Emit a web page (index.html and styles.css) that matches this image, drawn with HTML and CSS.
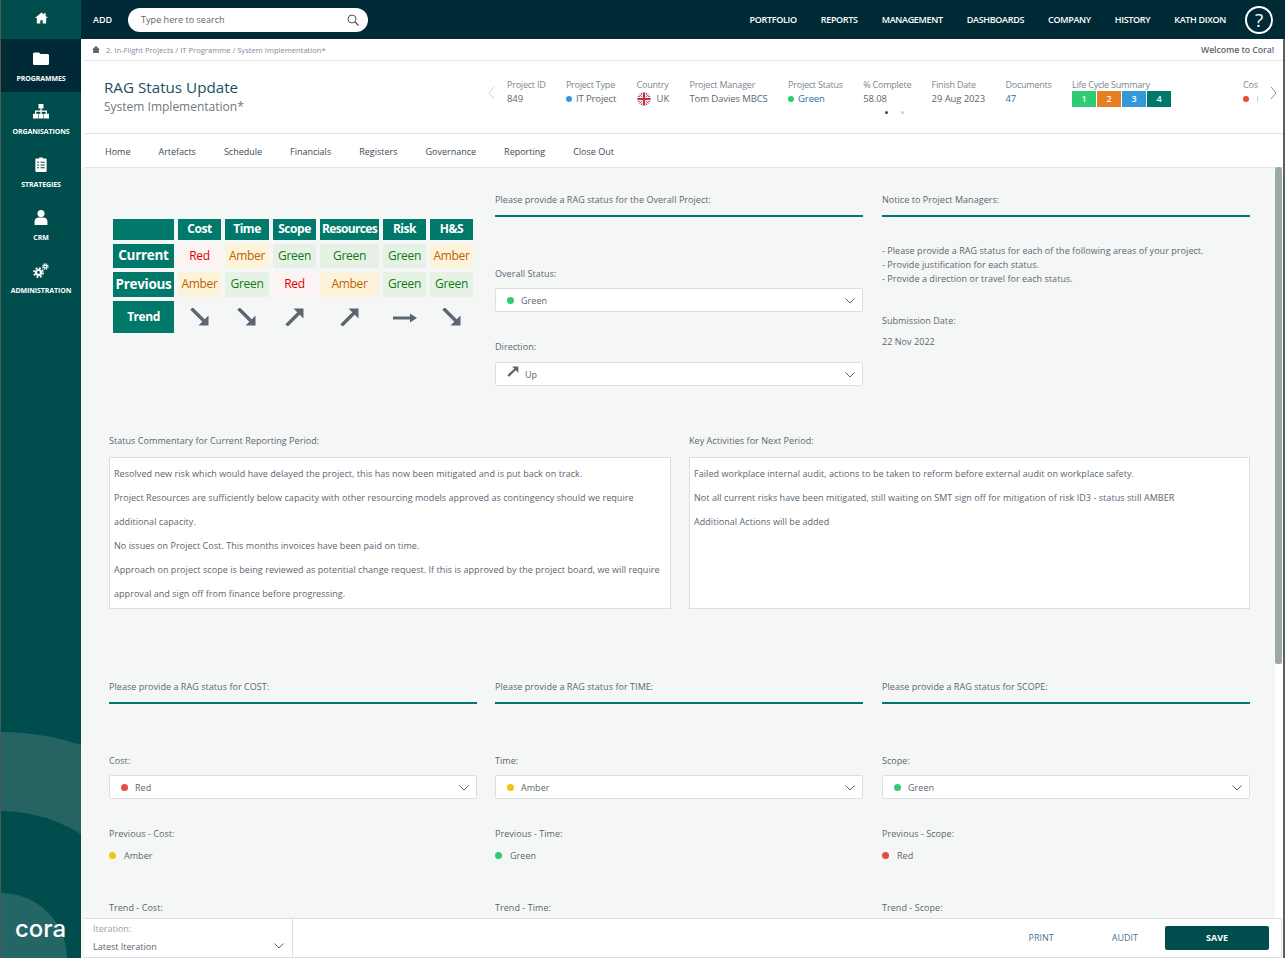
FILE: index.html
```html
<!DOCTYPE html>
<html lang="en">
<head>
<meta charset="utf-8">
<title>RAG Status Update</title>
<link rel="stylesheet" href="styles.css">
</head>
<body>
<div class="app">
  <aside class="sidebar">
    <div class="side-home"><svg class="ic-home" viewBox="0 0 14 12"><path d="M7 0 L9.500 2.100 V1 H11.500 V3.800 L14 6 H12 V12 H8.300 V8.500 H5.700 V12 H2 V6 H0 Z"/></svg></div>
    <div class="side-item active"><svg class="ic" viewBox="0 0 16 14"><path d="M1.500 1 H6 L7.500 2.500 H14.500 A1.500 1.500 0 0 1 16 4 V12 A1.500 1.500 0 0 1 14.500 13.500 H1.500 A1.500 1.500 0 0 1 0 12 V2.500 A1.500 1.500 0 0 1 1.500 1 Z"/></svg><span>PROGRAMMES</span></div>
    <div class="side-item"><svg class="ic" viewBox="0 0 16 15"><rect x="5.500" y="0" width="5" height="4.500"/><rect x="7.300" y="4.500" width="1.400" height="2.500"/><rect x="2" y="6.500" width="12" height="1.300"/><rect x="2" y="7" width="1.300" height="3"/><rect x="12.700" y="7" width="1.300" height="3"/><rect x="7.300" y="7" width="1.400" height="3"/><rect x="0" y="9.800" width="5" height="4.700"/><rect x="5.500" y="9.800" width="5" height="4.700"/><rect x="11" y="9.800" width="5" height="4.700"/></svg><span>ORGANISATIONS</span></div>
    <div class="side-item"><svg class="ic" viewBox="0 0 12 16"><path fill-rule="evenodd" d="M1 1.500 H4 V0.500 H8 V1.500 H11 A1 1 0 0 1 12 2.500 V15 A1 1 0 0 1 11 16 H1 A1 1 0 0 1 0 15 V2.500 A1 1 0 0 1 1 1.500 Z M2 5 V6 H4 V5 Z M5.500 5 V6 H10 V5 Z M2 8 V9 H4 V8 Z M5.500 8 V9 H10 V8 Z M2 11 V12 H4 V11 Z M5.500 11 V12 H10 V11 Z"/></svg><span>STRATEGIES</span></div>
    <div class="side-item"><svg class="ic" viewBox="0 0 12 14"><circle cx="6" cy="3.300" r="3.300"/><path d="M0 14 V11 A4 4 0 0 1 3.500 7 H8.500 A4 4 0 0 1 12 11 V14 Z"/></svg><span>CRM</span></div>
    <div class="side-item"><svg class="ic" viewBox="0 0 16 15"><circle cx="5.500" cy="9.500" r="2.500" fill="none" stroke="#fff" stroke-width="2.200"/><circle cx="5.500" cy="9.500" r="4.500" fill="none" stroke="#fff" stroke-width="1.800" stroke-dasharray="1.900 1.630"/><circle cx="12.300" cy="3.500" r="1.500" fill="none" stroke="#fff" stroke-width="1.300"/><circle cx="12.300" cy="3.500" r="2.700" fill="none" stroke="#fff" stroke-width="1.200" stroke-dasharray="1.200 0.920"/></svg><span>ADMINISTRATION</span></div>
    <div class="swoosh swoosh-a"></div>
    <div class="swoosh swoosh-b"></div>
    <div class="logo">cora</div>
  </aside>
  <div class="main">
    <header class="topbar">
      <span class="add">ADD</span>
      <div class="search"><span>Type here to search</span><svg class="search-ic" viewBox="0 0 12 12"><circle cx="5" cy="5" r="4" fill="none" stroke="#555" stroke-width="1"/><path d="M8 8 L11.500 11.500" stroke="#555" stroke-width="1.200"/></svg></div>
      <nav class="topnav">
        <span>PORTFOLIO</span><span>REPORTS</span><span>MANAGEMENT</span><span>DASHBOARDS</span><span>COMPANY</span><span>HISTORY</span><span>KATH DIXON</span>
      </nav>
      <div class="help">?</div>
    </header>
    <div class="crumbs">
      <svg class="crumb-home" viewBox="0 0 14 12"><path d="M7 0 L14 6 H12 V12 H2 V6 H0 Z"/></svg>
      <span class="crumb-text">2. In-Flight Projects / IT Programme / System Implementation*</span>
      <span class="welcome">Welcome to Cora!</span>
    </div>
    <section class="head">
      <div class="title-block">
        <h1>RAG Status Update</h1>
        <p>System Implementation*</p>
      </div>
      <div class="chev-l"><svg viewBox="0 0 7 14"><path d="M6 1 L1 7 L6 13" fill="none" stroke="#ccd0d4"/></svg></div>
      <div class="summary">
        <div class="stat"><label>Project ID</label><div>849</div></div>
        <div class="stat"><label>Project Type</label><div><i class="dot blue"></i>IT Project</div></div>
        <div class="stat"><label>Country</label><div class="uk"><svg class="flag" viewBox="0 0 14 14"><defs><clipPath id="c"><circle cx="7" cy="7" r="6.500"/></clipPath></defs><g clip-path="url(#c)"><rect width="14" height="14" fill="#4a5ea8"/><path d="M0 0 L14 14 M14 0 L0 14" stroke="#f4f4f4" stroke-width="2.600"/><path d="M0 0 L14 14 M14 0 L0 14" stroke="#d8586c" stroke-width="1"/><path d="M7 0 V14 M0 7 H14" stroke="#f4f4f4" stroke-width="4"/><path d="M7 0 V14 M0 7 H14" stroke="#d8283c" stroke-width="2.200"/></g></svg>UK</div></div>
        <div class="stat"><label>Project Manager</label><div>Tom Davies MBCS</div></div>
        <div class="stat"><label>Project Status</label><div class="link"><i class="dot green"></i>Green</div></div>
        <div class="stat"><label>% Complete</label><div>58.08</div></div>
        <div class="stat"><label>Finish Date</label><div>29 Aug 2023</div></div>
        <div class="stat"><label>Documents</label><div class="link">47</div></div>
        <div class="stat life"><label>Life Cycle Summary</label><div class="phases"><b class="p1">1</b><b class="p2">2</b><b class="p3">3</b><b class="p4">4</b></div></div>
      </div>
      <div class="stat clipped"><label>Cos</label><div><i class="dot red"></i><i class="tick"></i></div></div>
      <div class="chev-r"><svg viewBox="0 0 7 14"><path d="M1 1 L6 7 L1 13" fill="none" stroke="#8a929a"/></svg></div>
      <div class="pager"><i class="on"></i><i></i></div>
    </section>
    <nav class="tabs">
      <span>Home</span><span>Artefacts</span><span>Schedule</span><span>Financials</span><span>Registers</span><span>Governance</span><span>Reporting</span><span>Close Out</span>
    </nav>
    <div class="scrollbar"><div class="thumb"></div></div>
    <div class="edge"></div>
    <main class="content">
      <div class="row top">
        <div class="col rag-col">
          <table class="rag">
            <tr><th class="blank"></th><th>Cost</th><th>Time</th><th>Scope</th><th class="wide">Resources</th><th>Risk</th><th>H&amp;S</th></tr>
            <tr class="r-cur"><th class="big">Current</th><td class="red">Red</td><td class="amber">Amber</td><td class="green">Green</td><td class="green">Green</td><td class="green">Green</td><td class="amber">Amber</td></tr>
            <tr class="r-prev"><th class="big">Previous</th><td class="amber">Amber</td><td class="green">Green</td><td class="red">Red</td><td class="amber">Amber</td><td class="green">Green</td><td class="green">Green</td></tr>
            <tr class="r-trend"><th>Trend</th>
              <td class="arrow"><svg viewBox="0 0 20 18"><use href="#down"/></svg></td>
              <td class="arrow"><svg viewBox="0 0 20 18"><use href="#down"/></svg></td>
              <td class="arrow"><svg viewBox="0 0 20 18"><use href="#up"/></svg></td>
              <td class="arrow"><svg viewBox="0 0 20 18"><use href="#up"/></svg></td>
              <td class="arrow"><svg class="flat" viewBox="0 0 24 12"><path d="M0 6 H19" stroke="#5b6670" stroke-width="3"/><path d="M17 1.500 L24 6 L17 10.500 Z" fill="#5b6670"/></svg></td>
              <td class="arrow"><svg viewBox="0 0 20 18"><use href="#down"/></svg></td>
            </tr>
          </table>
          <svg class="defs" width="0" height="0"><defs>
            <g id="down"><path d="M1.500 0.500 L16 15" stroke="#5b6670" stroke-width="3.400"/><path d="M18.500 17.500 H8.500 L18.500 7.500 Z" fill="#5b6670"/></g>
            <g id="up"><path d="M1.500 17.500 L16 3" stroke="#5b6670" stroke-width="3.400"/><path d="M18.500 0.500 H8.500 L18.500 10.500 Z" fill="#5b6670"/></g>
          </defs></svg>
        </div>
        <div class="col">
          <div class="sec">Please provide a RAG status for the Overall Project:</div>
          <label class="lbl l-overall">Overall Status:</label>
          <div class="select"><i class="dot green"></i>Green<svg class="caret" viewBox="0 0 10 6"><path d="M0.500 0.500 L5 5 L9.500 0.500" fill="none" stroke="#5b6670"/></svg></div>
          <label class="lbl l-dir">Direction:</label>
          <div class="select"><svg class="mini" viewBox="0 0 20 18"><path d="M2 16.500 L15 4" stroke="#5b6670" stroke-width="4"/><path d="M19 0.500 H8.500 L19 11 Z" fill="#5b6670"/></svg>Up<svg class="caret" viewBox="0 0 10 6"><path d="M0.500 0.500 L5 5 L9.500 0.500" fill="none" stroke="#5b6670"/></svg></div>
        </div>
        <div class="col">
          <div class="sec">Notice to Project Managers:</div>
          <ul class="notice">
            <li>- Please provide a RAG status for each of the following areas of your project.</li>
            <li>- Provide justification for each status.</li>
            <li>- Provide a direction or travel for each status.</li>
          </ul>
          <label class="lbl l-sub">Submission Date:</label>
          <div class="val">22 Nov 2022</div>
        </div>
      </div>
      <div class="row two">
        <div class="col">
          <label class="lbl">Status Commentary for Current Reporting Period:</label>
          <div class="box">
            <p>Resolved new risk which would have delayed the project, this has now been mitigated and is put back on track.</p>
            <p>Project Resources are sufficiently below capacity with other resourcing models approved as contingency should we require additional capacity.</p>
            <p>No issues on Project Cost. This months invoices have been paid on time.</p>
            <p>Approach on project scope is being reviewed as potential change request. If this is approved by the project board, we will require approval and sign off from finance before progressing.</p>
          </div>
        </div>
        <div class="col">
          <label class="lbl">Key Activities for Next Period:</label>
          <div class="box">
            <p>Failed workplace internal audit, actions to be taken to reform before external audit on workplace safety.</p>
            <p>Not all current risks have been mitigated, still waiting on SMT sign off for mitigation of risk ID3 - status still AMBER</p>
            <p>Additional Actions will be added</p>
          </div>
        </div>
      </div>
      <div class="row three">
        <div class="col">
          <div class="sec">Please provide a RAG status for COST:</div>
          <label class="lbl l-field">Cost:</label>
          <div class="select"><i class="dot red"></i>Red<svg class="caret" viewBox="0 0 10 6"><path d="M0.500 0.500 L5 5 L9.500 0.500" fill="none" stroke="#5b6670"/></svg></div>
          <label class="lbl l-prev">Previous - Cost:</label>
          <div class="val dotted"><i class="dot yellow"></i>Amber</div>
          <label class="lbl l-trend">Trend - Cost:</label>
        </div>
        <div class="col">
          <div class="sec">Please provide a RAG status for TIME:</div>
          <label class="lbl l-field">Time:</label>
          <div class="select"><i class="dot yellow"></i>Amber<svg class="caret" viewBox="0 0 10 6"><path d="M0.500 0.500 L5 5 L9.500 0.500" fill="none" stroke="#5b6670"/></svg></div>
          <label class="lbl l-prev">Previous - Time:</label>
          <div class="val dotted"><i class="dot green"></i>Green</div>
          <label class="lbl l-trend">Trend - Time:</label>
        </div>
        <div class="col">
          <div class="sec">Please provide a RAG status for SCOPE:</div>
          <label class="lbl l-field">Scope:</label>
          <div class="select"><i class="dot green"></i>Green<svg class="caret" viewBox="0 0 10 6"><path d="M0.500 0.500 L5 5 L9.500 0.500" fill="none" stroke="#5b6670"/></svg></div>
          <label class="lbl l-prev">Previous - Scope:</label>
          <div class="val dotted"><i class="dot red"></i>Red</div>
          <label class="lbl l-trend">Trend - Scope:</label>
        </div>
      </div>
    </main>
    <footer class="footer">
      <div class="iter">
        <label>Iteration:</label>
        <div class="iter-val">Latest Iteration<svg class="caret" viewBox="0 0 10 6"><path d="M0.500 0.500 L5 5 L9.500 0.500" fill="none" stroke="#5b6670"/></svg></div>
      </div>
      <div class="actions"><span>PRINT</span><span>AUDIT</span><button class="save">SAVE</button></div>
    </footer>
  </div>
</div>
</body>
</html>
```
FILE: styles.css
```css
* { box-sizing: border-box; }
html, body { margin: 0; height: 100%; overflow: hidden; }
body { font-family: "Open Sans", "Noto Sans", sans-serif; font-size: 9px; color: #5b6670; background: #fff; }
.app { display: flex; width: 1285px; height: 958px; }

.sidebar { position: relative; width: 81px; flex: none; background: #004d4d; border-left: 1px solid #555; overflow: hidden; }
.side-home { height: 39px; display: flex; align-items: center; justify-content: center; padding-bottom: 3px; }
.ic-home { width: 13px; height: 12px; fill: #fff; }
.side-item { height: 53px; display: flex; flex-direction: column; align-items: center; padding-top: 12px; gap: 8px; color: #fff; font-size: 7px; font-weight: 700; letter-spacing: -0.1px; }
.side-item.active { background: #002b36; }
.ic { height: 15px; width: 16px; fill: #fff; }
.swoosh { position: absolute; background: rgba(255,255,255,.14); border-radius: 50%; }
.swoosh-a { left: -252px; top: 732px; width: 504px; height: 504px; overflow: hidden; background: #266363; }
.swoosh-a::after { content: ""; position: absolute; left: 102px; top: 79px; width: 300px; height: 300px; border-radius: 50%; background: #004d4d; }
.swoosh-b { left: -66px; top: 893px; width: 132px; height: 132px; }
.logo { position: absolute; left: 14px; top: 915px; color: #fff; font-size: 24px; line-height: 28px; font-weight: 500; font-family: "Inter", sans-serif; }

.main { position: relative; flex: 1; min-width: 0; display: flex; flex-direction: column; }

.topbar { height: 39px; flex: none; background: #002b36; color: #fff; display: flex; align-items: center; padding-left: 12px; }
.add { font-size: 9px; font-weight: 600; width: 35px; }
.search { position: relative; width: 240px; height: 24px; background: #fff; border-radius: 12px; display: flex; align-items: center; padding-left: 13px; color: #666; font-size: 9.100px; }
.search-ic { position: absolute; right: 9px; top: 6px; width: 12px; height: 12px; }
.topnav { margin-left: auto; display: flex; gap: 24px; font-size: 9px; font-weight: 600; letter-spacing: -0.32px; }
.help { width: 28px; height: 28px; margin: 0 12px 0 19px; border: 2px solid #fff; border-radius: 50%; display: flex; align-items: center; justify-content: center; font-size: 19px; }

.crumbs { height: 22px; flex: none; display: flex; align-items: center; margin-left: 3px; padding: 0 11px 0 8px; border-bottom: 1px solid #e2e4e6; font-size: 7.500px; color: #7b8a99; letter-spacing: 0.05px; }
.crumb-home { width: 8px; height: 7px; fill: #5b6670; margin-right: 6px; }
.welcome { margin-left: auto; font-size: 8.700px; font-weight: 600; color: #5b6670; letter-spacing: -0.05px; }

.head { position: relative; height: 73px; flex: none; margin-left: 3px; border-bottom: 1px solid #e2e4e6; display: flex; }
.title-block { width: 380px; padding: 16px 0 0 20px; }
.title-block h1 { margin: 0 0 1px; font-size: 15.200px; font-weight: 400; color: #22505e; line-height: 20px; }
.title-block p { margin: 0; font-size: 12px; line-height: 18px; color: #6e7880; }
.chev-l { position: absolute; left: 404px; top: 25px; }
.chev-l svg, .chev-r svg { width: 7px; height: 14px; display: block; }
.chev-r { position: absolute; right: 8px; top: 25px; }
.summary { display: flex; padding: 17px 0 0 40px; gap: 20.350px; position: absolute; left: 383px; top: 0; }
.stat { font-size: 9.500px; line-height: 14px; white-space: nowrap; letter-spacing: -0.1px; }
.stat label { display: block; color: #7c8791; font-size: 9px; letter-spacing: -0.22px; }
.dot { display: inline-block; width: 6px; height: 6px; border-radius: 50%; margin-right: 4px; vertical-align: 0; }
.blue { background: #3498db; }
.dot.green { background: #2ecc71; }
.dot.red { background: #e74c3c; }
.dot.yellow { background: #f1c40f; }
.link { color: #2a6fa8; }
.uk { display: flex; align-items: center; gap: 6px; }
.flag { width: 14px; height: 14px; }
.phases { display: flex; gap: 1px; margin-top: -1px; }
.phases b { width: 24px; height: 16px; display: flex; align-items: center; justify-content: center; color: #fff; font-size: 9px; font-weight: 600; }
.p1 { background: #2ecc71; } .p2 { background: #e67e22; } .p3 { background: #3498db; } .p4 { background: #00796b; }
.clipped { position: absolute; left: 1159px; top: 17px; }
.tick { display: inline-block; width: 1px; height: 6px; margin-left: 4px; background: #c9cdd1; }
.pager { position: absolute; left: 801px; top: 50px; display: flex; gap: 13px; }
.pager i { width: 3px; height: 3px; border-radius: 50%; background: #c9cdd1; }
.pager i.on { background: #3d4750; }

.tabs { height: 34px; flex: none; display: flex; align-items: center; gap: 28px; margin-left: 3px; padding: 1px 0 0 21px; border-bottom: 1px solid #e2e4e6; font-size: 9px; color: #3d4a55; letter-spacing: 0; }

.scrollbar { position: absolute; right: 3px; top: 167px; bottom: 0; width: 7px; }
.thumb { width: 7px; height: 497px; background: #9aa9a9; border-radius: 3px 3px 2px 2px; }
.edge { position: absolute; right: 0; top: 39px; bottom: 0; width: 2px; background: #5a5f63; }

.content { flex: 1; min-height: 0; overflow: hidden; background: #f5f7f7; padding: 27px 0 0 28px; margin-right: 10px; letter-spacing: 0.05px; }
.row { display: grid; grid-template-columns: 386px 387px 368px; }
.row .col { width: 368px; }
.rag-col { padding-top: 20px; }
.sec { height: 22px; border-bottom: 2px solid #00796b; line-height: 10px; font-size: 9px; }
.lbl { display: block; line-height: 12px; }
.select { position: relative; height: 24px; background: #fff; border: 1px solid #dcdfe1; border-radius: 2px; display: flex; align-items: center; padding-left: 11px; }
.select .dot { width: 7px; height: 7px; margin-right: 7px; }
.caret { position: absolute; right: 7px; top: 9px; width: 10px; height: 6px; }
.mini { width: 12px; height: 11px; margin-right: 6px; margin-top: -6px; }
.l-overall { margin-top: 51px; margin-bottom: 8px; }
.l-dir { margin-top: 29px; margin-bottom: 9px; }
.notice { list-style: none; margin: 27px 0 0; padding: 0; line-height: 14px; }
.l-sub { margin-top: 29px; }
.val { margin-top: 9px; line-height: 12px; }
.l-field { margin-top: 51px; margin-bottom: 8px; }
.l-prev { margin-top: 29px; }
.val.dotted { margin-top: 10px; }
.val.dotted .dot { width: 7px; height: 7px; margin-right: 8px; }
.l-trend { margin-top: 40px; }

.rag { border-collapse: separate; border-spacing: 4px; table-layout: fixed; }
.rag th, .rag td { padding: 0 0 2px; text-align: center; font-size: 12px; letter-spacing: -0.3px; }
.rag th { background: #00796b; color: #fff; font-weight: 700; height: 21px; letter-spacing: -0.45px; }
.rag th.wide { letter-spacing: -0.65px; }
.rag th.big { font-size: 13.500px; letter-spacing: -0.3px; }
.rag td.arrow { padding: 0; }
.rag th:nth-child(1) { width: 61px; }
.rag tr:first-child th:nth-child(2), .rag tr:first-child th:nth-child(4) { width: 43px; }
.rag tr:first-child th:nth-child(3) { width: 44px; }
.rag tr:first-child th:nth-child(5) { width: 59px; }
.rag tr:first-child th:nth-child(6), .rag tr:first-child th:nth-child(7) { width: 43px; }
.r-cur th, .r-cur td { height: 24px; }
.r-prev th, .r-prev td { height: 25px; }
.r-trend th, .r-trend td { height: 32px; }
td.red { background: #fdf3f2; color: #e00000; }
td.amber { background: #fdf3da; color: #bf5f00; }
td.green { background: #e5f2e5; color: #0f7b0f; }
td.arrow svg { height: 18px; width: 20px; vertical-align: middle; }
td.arrow svg.flat { width: 24px; height: 12px; }
.defs { position: absolute; }

.two { grid-template-columns: 580px 561px; margin-top: 49px; }
.row.two .col { width: auto; }
.two .col:first-child { width: 562px; }
.two .lbl { margin-bottom: 10px; }
.box { height: 152px; background: #fff; border: 1px solid #dcdfe1; padding: 4px; line-height: 24px; }
.box p { margin: 0; }
.three { margin-top: 73px; }

.footer { position: absolute; left: 3px; right: 3px; bottom: 0; height: 40px; background: #fff; border-top: 1px solid #dcdfe1; border-bottom: 1px solid #dcdfe1; border-right: 1px solid #dcdfe1; display: flex; align-items: center; }
.iter { position: relative; width: 209px; height: 100%; border-right: 1px solid #dcdfe1; padding: 3px 9px 0; }
.iter label { display: block; color: #9aa2a9; line-height: 14px; }
.iter-val { margin-top: 4px; line-height: 14px; }
.iter .caret { right: 8px; top: 24px; }
.actions { margin-left: auto; display: flex; align-items: center; padding-right: 12px; color: #4a7394; font-weight: 500; }
.actions span { margin: 0 58px 2px 0; }
.actions span:nth-child(2) { margin-right: 27px; }
.save { width: 104px; height: 24px; padding: 0 0 2px; background: #004d4d; color: #fff; border: 0; border-radius: 2px; font: 700 9px "Open Sans", sans-serif; }
```
